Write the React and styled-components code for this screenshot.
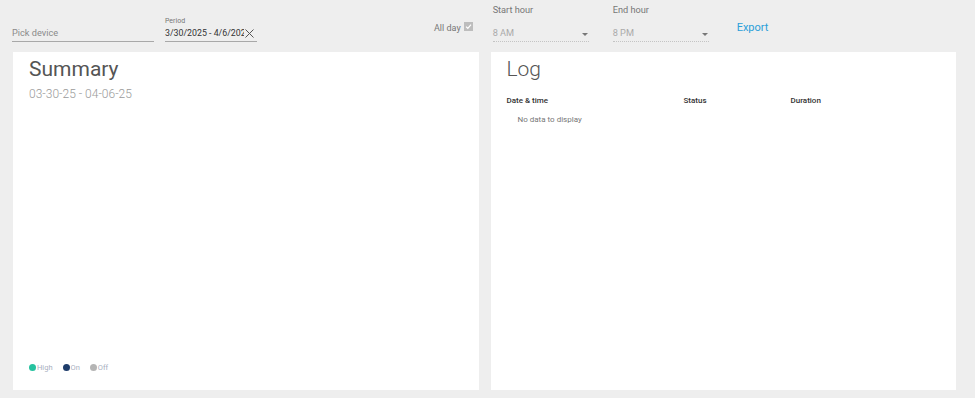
import styled, { createGlobalStyle } from "styled-components";

const GlobalStyle = createGlobalStyle`
  html, body {
    margin: 0;
    padding: 0;
    background: #eeeeee;
    font-family: Roboto, "Liberation Sans", sans-serif;
  }
`;

const Page = styled.div`
  width: 975px;
  height: 398px;
  display: flex;
  flex-direction: column;
  box-sizing: border-box;
`;

const Toolbar = styled.div`
  height: 52px;
  display: flex;
  align-items: flex-start;
  padding-left: 12px;
  box-sizing: border-box;
`;

const TextField = styled.div`
  width: ${({ width }) => width}px;
  margin-right: ${({ gap }) => gap || 0}px;
  height: 42px;
  display: flex;
  flex-direction: column;
  justify-content: flex-end;
  border-bottom: 1px solid #a8a8a8;
  box-sizing: border-box;
  padding-bottom: 2px;
`;

const SmallLabel = styled.div`
  font-size: 7px;
  line-height: 9px;
  color: #777;
  margin-bottom: 1px;
`;

const FieldValue = styled.div`
  display: flex;
  align-items: center;
  font-size: 9.2px;
  line-height: 12px;
  color: ${({ muted }) => (muted ? "#8a8a8a" : "#333")};
  white-space: nowrap;
`;

const ValueInput = styled.input`
  flex: 1;
  min-width: 0;
  border: none;
  outline: none;
  padding: 0;
  background: transparent;
  font-family: inherit;
  font-size: 8.8px;
  line-height: inherit;
  color: inherit;
`;

const ClearIcon = styled.svg`
  width: 9px;
  height: 9px;
  flex: none;
  margin: 0 3px 0 1px;
`;

const CheckWrap = styled.label`
  display: flex;
  align-items: center;
  gap: 3px;
  margin-top: 22px;
  margin-left: 177px;
  margin-right: 20px;
  font-size: 9px;
  line-height: 12px;
  color: #777;
`;

const CheckBox = styled.span`
  width: 9px;
  height: 9px;
  background: #bdbdbd;
  display: inline-flex;
  align-items: center;
  justify-content: center;
  margin-top: -4px;
`;

const SelectField = styled.div`
  width: 96px;
  height: 42px;
  margin-right: ${({ gap }) => gap}px;
  display: flex;
  flex-direction: column;
  justify-content: space-between;
  box-sizing: border-box;
`;

const SelectLabel = styled.div`
  font-size: 9.2px;
  line-height: 12px;
  color: #777;
  padding-top: 4px;
`;

const SelectBox = styled.div`
  display: flex;
  align-items: center;
  justify-content: space-between;
  font-size: 9.2px;
  line-height: 12px;
  color: #aaa;
  padding-bottom: 2px;
  border-bottom: 1px dotted #c4c4c4;
`;

const Caret = styled.span`
  width: 0;
  height: 0;
  border-left: 3px solid transparent;
  border-right: 3px solid transparent;
  border-top: 3px solid #777;
  margin-right: 1px;
  margin-top: 3px;
`;

const ExportButton = styled.button`
  margin-top: 21px;
  border: none;
  background: none;
  padding: 0;
  font-family: inherit;
  font-size: 11px;
  line-height: 14px;
  color: #2b9fd9;
  cursor: pointer;
`;

const Cards = styled.div`
  flex: 1;
  display: grid;
  grid-template-columns: 1fr 1fr;
  gap: 12px;
  padding: 0 19px 8px 13px;
  min-height: 0;
`;

const Card = styled.section`
  background: #fff;
  display: flex;
  flex-direction: column;
  padding: 4px 16px 0;
  box-sizing: border-box;
`;

const Title = styled.h2`
  margin: 0;
  font-size: 21px;
  line-height: 26px;
  font-weight: ${({ thin }) => (thin ? 300 : 400)};
  color: #555;
`;

const DateRange = styled.div`
  margin-top: 4px;
  font-size: 12px;
  line-height: 16px;
  color: #9a9a9a;
  font-weight: 300;
`;

const Legend = styled.div`
  margin-top: auto;
  margin-bottom: 18px;
  display: flex;
  gap: 10px;
`;

const LegendItem = styled.span`
  display: flex;
  align-items: center;
  font-size: 7.5px;
  color: #a9b0bf;
  &::before {
    content: "";
    width: 7px;
    height: 7px;
    border-radius: 50%;
    background: ${({ color }) => color};
    margin-right: 1px;
  }
`;

const Table = styled.div`
  margin-top: 14px;
  display: grid;
  grid-template-columns: 177px 107px 1fr;
`;

const HeadCell = styled.div`
  font-size: 8px;
  font-weight: 500;
  color: #333;
  line-height: 10px;
`;

const Empty = styled.div`
  grid-column: 1 / -1;
  padding: 9px 0 0 11px;
  font-size: 8px;
  line-height: 10px;
  color: #777;
`;

export default function App() {
  return (
    <Page>
      <GlobalStyle />
      <Toolbar>
        <TextField width={142} gap={11}>
          <FieldValue muted>Pick device</FieldValue>
        </TextField>
        <TextField width={92}>
          <SmallLabel>Period</SmallLabel>
          <FieldValue>
            <ValueInput readOnly value="3/30/2025 - 4/6/2025" />
            <ClearIcon viewBox="0 0 9 9">
              <path d="M0.5 0.5L8.5 8.5M8.5 0.5L0.5 8.5" stroke="#555" strokeWidth="1" />
            </ClearIcon>
          </FieldValue>
        </TextField>
        <CheckWrap>
          All day
          <CheckBox>
            <svg width="7" height="7" viewBox="0 0 7 7">
              <path d="M1 3.6L2.8 5.3L6 1.6" stroke="#fff" strokeWidth="1.2" fill="none" />
            </svg>
          </CheckBox>
        </CheckWrap>
        <SelectField gap={24}>
          <SelectLabel>Start hour</SelectLabel>
          <SelectBox>
            8 AM
            <Caret />
          </SelectBox>
        </SelectField>
        <SelectField gap={28}>
          <SelectLabel>End hour</SelectLabel>
          <SelectBox>
            8 PM
            <Caret />
          </SelectBox>
        </SelectField>
        <ExportButton>Export</ExportButton>
      </Toolbar>
      <Cards>
        <Card>
          <Title>Summary</Title>
          <DateRange>03-30-25 - 04-06-25</DateRange>
          <Legend>
            <LegendItem color="#26c29f">High</LegendItem>
            <LegendItem color="#1f3d6b">On</LegendItem>
            <LegendItem color="#b5b5b5">Off</LegendItem>
          </Legend>
        </Card>
        <Card>
          <Title thin>Log</Title>
          <Table>
            <HeadCell>Date &amp; time</HeadCell>
            <HeadCell>Status</HeadCell>
            <HeadCell>Duration</HeadCell>
            <Empty>No data to display</Empty>
          </Table>
        </Card>
      </Cards>
    </Page>
  );
}
